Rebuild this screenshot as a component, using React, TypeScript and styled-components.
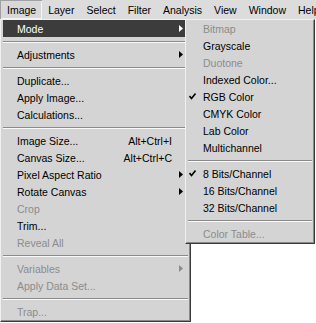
import styled, { createGlobalStyle } from "styled-components";

type Item =
	| { sep: true }
	| {
			sep?: false;
			label: string;
			shortcut?: string;
			sub?: boolean;
			disabled?: boolean;
			checked?: boolean;
			active?: boolean;
	  };

const GlobalStyle = createGlobalStyle`
    html, body {
        margin: 0;
        padding: 0;
        background: #fff;
    }
    body {
        font-family: "Liberation Sans", Arial, sans-serif;
        font-size: 10.5px;
        color: #000;
    }
`;

const Screen = styled.div`
    width: 316px;
    height: 323px;
    overflow: hidden;
    background: #fff;
`;

const MenuBar = styled.div`
    display: flex;
    align-items: stretch;
    height: 19px;
    background: #dcdcdc;
    overflow: hidden;
`;

const BarItem = styled.div<{ $open?: boolean }>`
    display: flex;
    align-items: center;
    flex: none;
    padding: 0 6px;
    white-space: nowrap;
    &:first-child {
        padding-left: 7px;
    }
    ${(p) =>
		p.$open &&
		`
        box-shadow: inset 1px 1px 0 #a0a0a0, inset -1px -1px 0 #f4f4f4;
        background: #d8d8d8;
    `}
`;

const MenuArea = styled.div`
    display: flex;
    align-items: flex-start;
`;

const Menu = styled.div<{ $width: number; $overlap?: number }>`
    width: ${(p) => p.$width}px;
    margin-left: ${(p) => (p.$overlap ? -p.$overlap : 0)}px;
    box-sizing: border-box;
    background: #d4d4d4;
    border: 1px solid;
    border-color: #f0f0f0 #3a3a3a #3a3a3a #f0f0f0;
    box-shadow: inset -1px -1px 0 #8a8a8a;
    padding: 0 0 1px;
    position: relative;
`;

const Row = styled.div<{ $active?: boolean; $disabled?: boolean; $check: number }>`
    display: flex;
    align-items: center;
    height: 17px;
    margin: 0 2px;
    white-space: nowrap;
    background: ${(p) => (p.$active ? "#3c3c3c" : "transparent")};
    color: ${(p) => (p.$active ? "#fff" : p.$disabled ? "#8c8c8c" : "#000")};
    .check {
        width: ${(p) => p.$check}px;
        flex: none;
        display: flex;
        padding-left: 1px;
        box-sizing: border-box;
    }
    .label {
        flex: 1;
    }
    .shortcut {
        padding-right: 3px;
    }
    .arrow {
        width: 13px;
        flex: none;
        display: flex;
        padding-left: 4px;
        box-sizing: border-box;
    }
`;

const Separator = styled.div`
    height: 9px;
    display: flex;
    flex-direction: column;
    justify-content: center;
    margin: 0 2px;
    &::before {
        content: "";
        height: 1px;
        background: #8a8a8a;
    }
    &::after {
        content: "";
        height: 1px;
        background: #fafafa;
    }
`;

const Arrow = ({ color }: { color: string }) => (
	<svg width="4" height="7" viewBox="0 0 4 7">
		<polygon points="0,0 4,3.5 0,7" fill={color} />
	</svg>
);

const Check = () => (
	<svg width="7" height="7" viewBox="0 0 7 7">
		<polyline points="0.5,3 2.5,5.5 6.5,0.5" fill="none" stroke="#000" strokeWidth="1.6" />
	</svg>
);

const mainItems: Item[] = [
	{ label: "Mode", sub: true, active: true },
	{ sep: true },
	{ label: "Adjustments", sub: true },
	{ sep: true },
	{ label: "Duplicate..." },
	{ label: "Apply Image..." },
	{ label: "Calculations..." },
	{ sep: true },
	{ label: "Image Size...", shortcut: "Alt+Ctrl+I" },
	{ label: "Canvas Size...", shortcut: "Alt+Ctrl+C" },
	{ label: "Pixel Aspect Ratio", sub: true },
	{ label: "Rotate Canvas", sub: true },
	{ label: "Crop", disabled: true },
	{ label: "Trim..." },
	{ label: "Reveal All", disabled: true },
	{ sep: true },
	{ label: "Variables", sub: true, disabled: true },
	{ label: "Apply Data Set...", disabled: true },
	{ sep: true },
	{ label: "Trap...", disabled: true },
];

const modeItems: Item[] = [
	{ label: "Bitmap", disabled: true },
	{ label: "Grayscale" },
	{ label: "Duotone", disabled: true },
	{ label: "Indexed Color..." },
	{ label: "RGB Color", checked: true },
	{ label: "CMYK Color" },
	{ label: "Lab Color" },
	{ label: "Multichannel" },
	{ sep: true },
	{ label: "8 Bits/Channel", checked: true },
	{ label: "16 Bits/Channel" },
	{ label: "32 Bits/Channel" },
	{ sep: true },
	{ label: "Color Table...", disabled: true },
];

const barItems = ["Image", "Layer", "Select", "Filter", "Analysis", "View", "Window", "Help"];

function renderItems(items: Item[], check: number, arrows: boolean) {
	return items.map((item, index) => {
		if (item.sep) {
			return <Separator key={index} />;
		}
		const arrowColor = item.active ? "#fff" : item.disabled ? "#8c8c8c" : "#000";
		return (
			<Row key={index} $active={item.active} $disabled={item.disabled} $check={check}>
				<span className="check">{item.checked ? <Check /> : null}</span>
				<span className="label">{item.label}</span>
				{item.shortcut ? <span className="shortcut">{item.shortcut}</span> : null}
				{arrows ? <span className="arrow">{item.sub ? <Arrow color={arrowColor} /> : null}</span> : null}
			</Row>
		);
	});
}

function App() {
	return (
		<Screen>
			<GlobalStyle />
			<MenuBar>
				{barItems.map((name, index) => (
					<BarItem key={name} $open={index === 0}>
						{name}
					</BarItem>
				))}
			</MenuBar>
			<MenuArea>
				<Menu $width={191}>{renderItems(mainItems, 14, true)}</Menu>
				<Menu $width={130} $overlap={6}>
					{renderItems(modeItems, 15, false)}
				</Menu>
			</MenuArea>
		</Screen>
	);
}

export default App;
